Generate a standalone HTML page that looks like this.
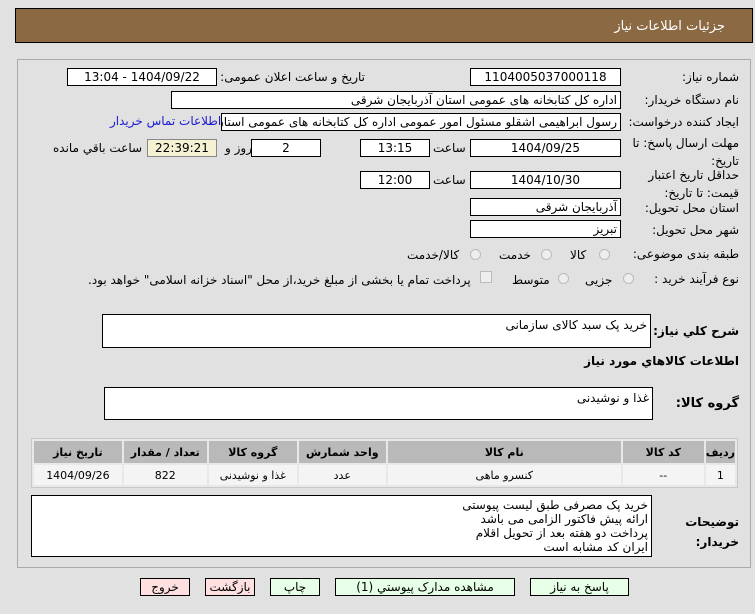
<!DOCTYPE html>
<html><head><meta charset="utf-8"><style>
*{margin:0;padding:0;box-sizing:border-box}
body{width:755px;height:614px;background:#e1e1e1;font-family:"DejaVu Sans","Liberation Sans",sans-serif;font-size:12px;color:#000;position:relative;overflow:hidden;direction:rtl}
.a{position:absolute;white-space:nowrap}
.box{position:absolute;background:#fff;border:1px solid #000;height:18px;line-height:16px;font-size:12px;padding:0 3px;overflow:hidden;white-space:nowrap}
.c{text-align:center}
.l{font-size:12px}
.b{font-weight:bold}
.r{position:absolute;width:11px;height:11px;border-radius:50%;border:1px solid #bbb;background:#eee}
.ta{position:absolute;background:#fff;border:1px solid #000;padding:2px 3px;font-size:12px;line-height:16px}
table{position:absolute;border-collapse:separate;border-spacing:2px;background:#e8e8e8;border:1px solid #c8c8c8}
th{background:#b9b9b9;height:22px;font-size:11px;font-weight:bold}
td{background:#f4f4f4;height:20px;text-align:center;font-size:11px}
.btn{position:absolute;top:578px;height:18px;border:1px solid #000;text-align:center;line-height:16px;font-size:12px}
.g{background:#e6ffe6}.p{background:#ffe0e0}
</style></head><body>
<div class="a" style="left:15px;top:8px;width:738px;height:35px;background:#8b6943;border:1px solid #000"></div>
<div class="a" style="right:30px;top:19px;color:#fff;font-size:13px">جزئیات اطلاعات نیاز</div>
<div class="a" style="left:17px;top:59px;width:734px;height:509px;border:1px solid #aaa"></div>

<div class="a l" style="right:16px;top:70px">شماره نیاز:</div>
<div class="box c" style="left:470px;top:68px;width:151px;">1104005037000118</div>
<div class="a l" style="right:390px;top:70px">تاریخ و ساعت اعلان عمومی:</div>
<div class="box c" style="left:67px;top:68px;width:150px;">1404/09/22 - 13:04</div>

<div class="a l" style="right:16px;top:93px">نام دستگاه خریدار:</div>
<div class="box" style="left:171px;top:91px;width:450px;">اداره کل کتابخانه های عمومی استان آذربایجان شرقی</div>

<div class="a l" style="right:16px;top:115px">ایجاد کننده درخواست:</div>
<div class="box" style="left:221px;top:113px;width:400px;">رسول ابراهیمی اشقلو مسئول امور عمومی اداره کل کتابخانه های عمومی استان</div>
<div class="a l" style="left:110px;top:114px;color:#1a1ad0">اطلاعات تماس خریدار</div>

<div class="a l" style="right:16px;top:134px;line-height:18px;text-align:right">مهلت ارسال پاسخ: تا<br>تاریخ:</div>
<div class="box c" style="left:470px;top:139px;width:151px;">1404/09/25</div>
<div class="a l" style="left:433px;top:141px">ساعت</div>
<div class="box c" style="left:360px;top:139px;width:70px;">13:15</div>
<div class="box c" style="left:251px;top:139px;width:70px;">2</div>
<div class="a l" style="left:225px;top:141px">روز و</div>
<div class="box c" style="left:147px;top:139px;width:70px;background:#f5f1d3;border-color:#888">22:39:21</div>
<div class="a l" style="left:53px;top:141px">ساعت باقي مانده</div>

<div class="a l" style="right:16px;top:166px;line-height:18px;text-align:right">حداقل تاریخ اعتبار<br>قیمت: تا تاریخ:</div>
<div class="box c" style="left:470px;top:171px;width:151px;">1404/10/30</div>
<div class="a l" style="left:433px;top:173px">ساعت</div>
<div class="box c" style="left:360px;top:171px;width:70px;">12:00</div>

<div class="a l" style="right:16px;top:201px">استان محل تحویل:</div>
<div class="box" style="left:470px;top:198px;width:151px;">آذربایجان شرقی</div>
<div class="a l" style="right:16px;top:223px">شهر محل تحویل:</div>
<div class="box" style="left:470px;top:220px;width:151px;">تبریز</div>

<div class="a l" style="right:16px;top:247px">طبقه بندی موضوعی:</div>
<div class="r" style="left:599px;top:249px"></div><div class="a l" style="left:570px;top:248px">کالا</div>
<div class="r" style="left:541px;top:249px"></div><div class="a l" style="left:499px;top:248px">خدمت</div>
<div class="r" style="left:470px;top:249px"></div><div class="a l" style="left:407px;top:248px">کالا/خدمت</div>

<div class="a l" style="right:16px;top:272px">نوع فرآیند خرید :</div>
<div class="r" style="left:623px;top:273px"></div><div class="a l" style="left:585px;top:273px">جزیی</div>
<div class="r" style="left:558px;top:273px"></div><div class="a l" style="left:512px;top:273px">متوسط</div>
<div class="a" style="left:480px;top:271px;width:12px;height:12px;border:1px solid #bbb;background:#eee"></div>
<div class="a l" style="left:88px;top:273px">پرداخت تمام یا بخشی از مبلغ خرید،از محل "اسناد خزانه اسلامی" خواهد بود.</div>

<div class="a b" style="right:16px;top:324px">شرح کلي نیاز:</div>
<div class="ta" style="left:102px;top:314px;width:549px;height:34px">خرید پک سبد کالای سازمانی</div>
<div class="a b" style="right:16px;top:354px">اطلاعات کالاهاي مورد نیاز</div>
<div class="a b" style="right:16px;top:396px;font-size:13px">گروه کالا:</div>
<div class="ta" style="left:104px;top:387px;width:549px;height:33px">غذا و نوشیدنی</div>

<table style="left:31px;top:438px;width:707px">
<tr><th style="width:27px">ردیف</th><th style="width:81px">کد کالا</th><th style="width:233px">نام کالا</th><th style="width:87px">واحد شمارش</th><th style="width:88px">گروه کالا</th><th style="width:83px">تعداد / مقدار</th><th>تاریخ نیاز</th></tr>
<tr><td>1</td><td>--</td><td>کنسرو ماهی</td><td>عدد</td><td>غذا و نوشیدنی</td><td>822</td><td>1404/09/26</td></tr>
</table>

<div class="a b" style="right:16px;top:512px;line-height:20px;text-align:right">توضیحات<br>خریدار:</div>
<div class="ta" style="left:31px;top:495px;width:621px;height:62px;line-height:14px;padding-top:2px">خرید پک مصرفی طبق لیست پیوستی<br>ارائه پیش فاکتور الزامی می باشد<br>پرداخت دو هفته بعد از تحویل اقلام<br>ایران کد مشابه است</div>

<div class="btn g" style="left:530px;width:99px">پاسخ به نیاز</div>
<div class="btn g" style="left:335px;width:180px">مشاهده مدارک پیوستي (1)</div>
<div class="btn g" style="left:270px;width:50px">چاپ</div>
<div class="btn p" style="left:205px;width:50px">بازگشت</div>
<div class="btn p" style="left:140px;width:50px">خروج</div>
</body></html>
